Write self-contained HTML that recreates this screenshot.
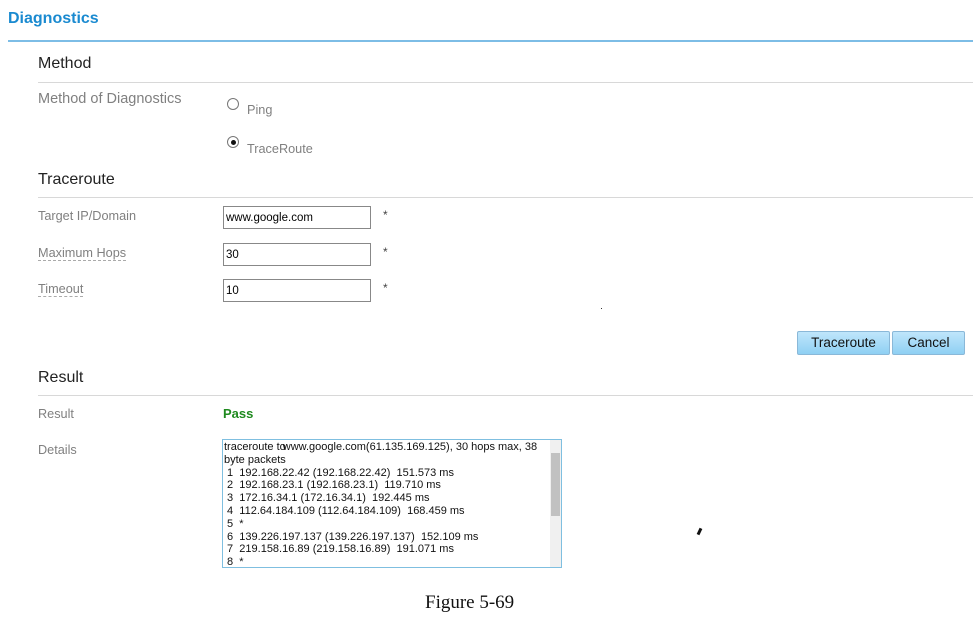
<!DOCTYPE html>
<html><head><meta charset="utf-8"><style>
body{margin:0;width:977px;height:628px;background:#fff;position:relative;overflow:hidden;font-family:"Liberation Sans",Arial,sans-serif}
.a{position:absolute;white-space:nowrap}
.h{font-size:16px;color:#222}
.ln{position:absolute;left:38px;width:935px;height:1px;background:#d8d8d8}
.lb{font-size:12.7px;color:#808080}
.dot{border-bottom:1px dashed #aaa;line-height:14px}
.in{position:absolute;left:223px;width:144px;height:21px;border:1px solid #888;font-size:11.5px;line-height:23px;padding-left:2px;box-sizing:content-box;color:#000}
.st{font-size:12px;color:#444}
.rad{position:absolute;width:10px;height:10px;border:1px solid #777;border-radius:50%;background:#fff}
.btn{position:absolute;top:331px;height:22px;border:1px solid #8ab8d8;border-radius:2px;background:linear-gradient(#bfe6fb,#8fd0f3);font-size:13.5px;color:#111;text-align:center;line-height:22px}
</style></head><body>
<div class="a" style="left:8px;top:10px;font-size:16px;font-weight:bold;color:#1a8ad0">Diagnostics</div>
<div style="position:absolute;left:8px;top:40px;width:965px;height:2px;background:#7dbde6"></div>

<div class="a h" style="left:38px;top:55px">Method</div>
<div class="ln" style="top:82px"></div>
<div class="a" style="left:38px;top:91px;font-size:14.5px;color:#808080">Method of Diagnostics</div>
<div class="rad" style="left:227px;top:98px"></div>
<div class="a lb" style="left:247px;top:103px">Ping</div>
<div class="rad" style="left:227px;top:136px"><div style="position:absolute;left:2.5px;top:2.5px;width:5px;height:5px;border-radius:50%;background:#111"></div></div>
<div class="a lb" style="left:247px;top:142px">TraceRoute</div>

<div class="a h" style="left:38px;top:171px">Traceroute</div>
<div class="ln" style="top:197px"></div>
<div class="a lb" style="left:38px;top:209px">Target IP/Domain</div>
<div class="in" style="top:206px">www.google.com</div>
<div class="a st" style="left:383px;top:208px">*</div>
<div class="a lb dot" style="left:38px;top:246px">Maximum Hops</div>
<div class="in" style="top:243px">30</div>
<div class="a st" style="left:383px;top:245px">*</div>
<div class="a lb dot" style="left:38px;top:282px">Timeout</div>
<div class="in" style="top:279px">10</div>
<div class="a st" style="left:383px;top:281px">*</div>
<div style="position:absolute;left:601px;top:308px;width:1px;height:1px;background:#333"></div>

<div class="btn" style="left:797px;width:91px">Traceroute</div>
<div class="btn" style="left:892px;width:71px">Cancel</div>

<div class="a h" style="left:38px;top:369px">Result</div>
<div class="ln" style="top:395px"></div>
<div class="a lb" style="left:38px;top:407px">Result</div>
<div class="a" style="left:223px;top:406px;font-size:13px;font-weight:bold;color:#1f8a1f">Pass</div>
<div class="a lb" style="left:38px;top:443px">Details</div>
<div style="position:absolute;left:222px;top:439px;width:338px;height:127px;border:1px solid #7fbfe0;overflow:hidden;font-size:11px;line-height:12.8px;color:#111">
<div style="position:absolute;left:1px;top:1px;width:325px;white-space:pre">traceroute to<span style="margin-left:-3px">www.google.com</span>(61.135.169.125), 30 hops max, 38
byte packets
 1  192.168.22.42 (192.168.22.42)  151.573 ms
 2  192.168.23.1 (192.168.23.1)  119.710 ms
 3  172.16.34.1 (172.16.34.1)  192.445 ms
 4  112.64.184.109 (112.64.184.109)  168.459 ms
 5  *
 6  139.226.197.137 (139.226.197.137)  152.109 ms
 7  219.158.16.89 (219.158.16.89)  191.071 ms
 8  *</div>
<div style="position:absolute;right:0;top:0;width:11px;height:127px;background:#f0f0f0"></div>
<div style="position:absolute;right:1px;top:13px;width:9px;height:63px;background:#c1c1c1"></div>
</div>
<div style="position:absolute;left:698px;top:528px;width:3px;height:7px;background:#111;transform:rotate(25deg)"></div>

<div class="a" style="left:425px;top:592px;font-family:'Liberation Serif',serif;font-size:19px;color:#111">Figure 5-69</div>
</body></html>
